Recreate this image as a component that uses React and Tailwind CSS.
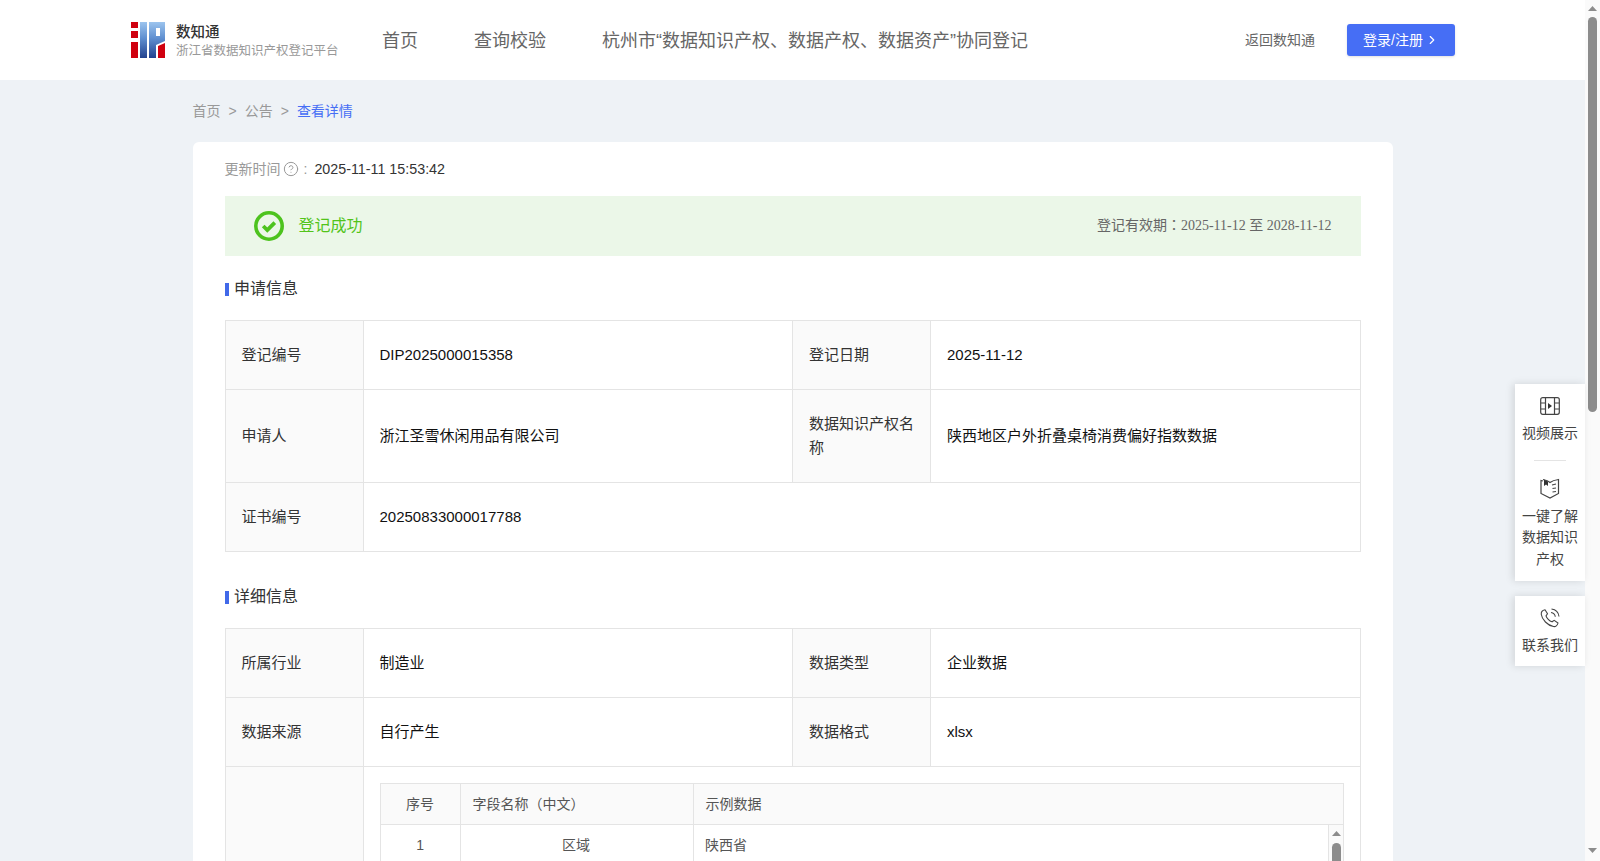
import { ChevronRight, CircleHelp } from "lucide-react";

const fieldRows = [
  ["1", "区域", "陕西省"],
  ["2", "产品类别", "户外折叠桌椅"],
  ["3", "消费群体", "家庭用户"],
  ["4", "偏好指数", "82.6"],
  ["5", "统计周期", "2025年"],
  ["6", "渠道", "线上"],
  ["7", "价格区间", "200-500元"],
];

function Logo() {
  return (
    <svg width="34" height="36" viewBox="0 0 34 36" className="shrink-0">
      <defs>
        <linearGradient id="logoBlue" x1="0" y1="0" x2="0" y2="1">
          <stop offset="0" stopColor="#9cc4ee" />
          <stop offset="0.45" stopColor="#5f8fd0" />
          <stop offset="1" stopColor="#22428f" />
        </linearGradient>
      </defs>
      <rect x="0" y="0" width="7" height="6" fill="#d0000f" />
      <rect x="0" y="9" width="7" height="7" fill="#d0000f" />
      <rect x="0" y="20" width="7" height="16" fill="#d0000f" />
      <rect x="9" y="0" width="7" height="36" fill="url(#logoBlue)" />
      <path d="M18 0H34V19L25 23V36H18Z" fill="url(#logoBlue)" />
      <rect x="25" y="6" width="4" height="8" fill="#fff" />
      <path d="M27 24L34 21V36H27Z" fill="#d0000f" />
    </svg>
  );
}

function CheckIcon() {
  return (
    <svg width="30" height="30" viewBox="0 0 30 30" className="shrink-0">
      <circle cx="15" cy="15" r="13.2" fill="none" stroke="#4dc31e" strokeWidth="3.6" />
      <path d="M9.2 15L13.3 19L20.8 11.600" fill="none" stroke="#4dc31e" strokeWidth="3.8" />
    </svg>
  );
}

function VideoIcon() {
  return (
    <svg width="20" height="18" viewBox="0 0 20 18" fill="none" stroke="#444" strokeWidth="1.2">
      <rect x="0.7" y="0.7" width="18.6" height="16.6" rx="2" />
      <path d="M5.5 1V17M14.5 1V17M1 6H5.5M1 12H5.5M14.5 6H19M14.5 12H19" />
      <path d="M8 6L12 9L8 12Z" fill="#333" stroke="none" />
    </svg>
  );
}

function BookIcon() {
  return (
    <svg width="20" height="21" viewBox="0 0 20 21" fill="none" stroke="#444" strokeWidth="1.2">
      <path d="M3 1.500C6 2 8.500 3 10 4.500C12 3 15 2 18.500 1.500V15.500L10 20L1 15.500V2.500L3 3" />
      <path d="M4 1.500V8L6 6.500L8 8V3.500" fill="#333" stroke="none" />
      <path d="M12 7L16 6M12.500 10.500L16 10M12.500 14L16 13.500" />
    </svg>
  );
}

function PhoneIcon() {
  return (
    <svg width="20" height="20" viewBox="0 0 20 20" fill="none" stroke="#444" strokeWidth="1.1">
      <path d="M5 1.800L7.500 5.800L6 7.800C6.500 10 9.500 13 12 13.800L14.200 12.300L18 15C17.500 17.500 15.500 19 13.500 18.500C7.500 17.500 2 11.500 1.300 6.500C1 4.200 2.500 2.300 5 1.800Z" />
      <path d="M11 4.500C13.500 4.800 15 6.300 15.300 8.800" />
      <path d="M11.500 1C15.500 1.500 18.500 4.300 19 8.500" />
    </svg>
  );
}

function Arrow({ down }) {
  return (
    <svg width="9" height="5" viewBox="0 0 9 5" className="shrink-0">
      <path d={down ? "M0 0H9L4.500 5Z" : "M4.500 0L9 5H0Z"} fill="#8c8c8c" />
    </svg>
  );
}

function SectionTitle({ children }) {
  return (
    <div className="flex items-center gap-[5.500px] text-[16px] leading-6 text-[#333]">
      <span className="h-[13px] w-1 bg-[#4169e9]" />
      {children}
    </div>
  );
}

function Label({ children }) {
  return (
    <td className="border border-[#e4e4e4] bg-[#fafafa] px-4 py-[22px] align-middle text-[#333]">
      {children}
    </td>
  );
}

function Value({ children, colSpan }) {
  return (
    <td colSpan={colSpan} className="border border-[#e4e4e4] px-4 py-[22px] align-middle text-[#111]">
      {children}
    </td>
  );
}

function InfoTable({ children }) {
  return (
    <table className="w-full table-fixed border-collapse text-[15px] leading-6">
      <colgroup>
        <col className="w-[138px]" />
        <col className="w-[429.500px]" />
        <col className="w-[138px]" />
        <col />
      </colgroup>
      <tbody>{children}</tbody>
    </table>
  );
}

function SideItem({ icon, lines }) {
  return (
    <div className="flex flex-col items-center">
      <div className="flex h-5 items-center">{icon}</div>
      <div className="mt-[7px] w-[56px] text-center text-[14px] leading-[21.500px] text-[#444]">
        {lines}
      </div>
    </div>
  );
}

export default function App() {
  return (
    <div className="flex h-screen overflow-hidden bg-[#eef2f6] font-['Liberation_Sans','Noto_Sans_CJK_SC',sans-serif]">
      <div className="relative min-w-0 flex-1">
        <div className="h-full overflow-y-auto">
          <header className="flex h-20 items-center bg-white pl-[131px] pr-[130px]">
            <Logo />
            <div className="mt-[2px] ml-[11px] w-[200px]">
              <div className="text-[14.500px] leading-5 font-medium text-[#333]">数知通</div>
              <div className="whitespace-nowrap text-[12.500px] leading-[19px] text-[#999]">
                浙江省数据知识产权登记平台
              </div>
            </div>
            <nav className="mt-[2px] ml-[6px] flex gap-[56px] text-[18px] text-[#666]">
              <span>首页</span>
              <span>查询校验</span>
              <span>杭州市“数据知识产权、数据产权、数据资产”协同登记</span>
            </nav>
            <div className="ml-auto flex items-center gap-8">
              <span className="text-[14px] text-[#666]">返回数知通</span>
              <button className="flex h-8 w-[108px] items-center justify-center gap-[2px] rounded-[3px] bg-[#466ef5] text-[14px] text-white shadow-sm">
                登录/注册
                <ChevronRight size={14} strokeWidth={2} />
              </button>
            </div>
          </header>

          <main className="mx-auto w-[1200px] pb-10">
            <div className="flex h-[62px] items-center gap-2 text-[14px] text-[#999]">
              <span>首页</span>
              <span>&gt;</span>
              <span>公告</span>
              <span>&gt;</span>
              <span className="text-[#466ef5]">查看详情</span>
            </div>

            <div className="min-h-[1600px] rounded-md bg-white px-8 pt-4">
              <div className="flex h-[22px] items-center text-[14px] text-[#999]">
                更新时间
                <CircleHelp size={16} strokeWidth={1.500} className="ml-[2px]" />
                <span className="mr-[7px] ml-[5px]">:</span>
                <span className="mt-px text-[14.300px] text-[#333]">2025-11-11 15:53:42</span>
              </div>

              <div className="mt-[16px] flex h-[60px] items-center bg-[#ebf7e8] pl-[29px] pr-[29px]">
                <CheckIcon />
                <span className="ml-[15px] text-[16px] text-[#52c41a]">登记成功</span>
                <span className="mb-[2px] ml-auto font-['Liberation_Serif','Noto_Sans_CJK_SC',serif] text-[14px] text-[#666]">
                  登记有效期<span className="font-['Noto_Sans_CJK_TC',serif]">：</span>2025-11-12 至 2028-11-12
                </span>
              </div>

              <div className="mt-[21px] mb-[19px]">
                <SectionTitle>申请信息</SectionTitle>
              </div>
              <InfoTable>
                <tr>
                  <Label>登记编号</Label>
                  <Value>DIP2025000015358</Value>
                  <Label>登记日期</Label>
                  <Value>2025-11-12</Value>
                </tr>
                <tr>
                  <Label>申请人</Label>
                  <Value>浙江圣雪休闲用品有限公司</Value>
                  <Label>数据知识产权名称</Label>
                  <Value>陕西地区户外折叠桌椅消费偏好指数数据</Value>
                </tr>
                <tr>
                  <Label>证书编号</Label>
                  <Value colSpan={3}>20250833000017788</Value>
                </tr>
              </InfoTable>

              <div className="mt-[33px] mb-[19px]">
                <SectionTitle>详细信息</SectionTitle>
              </div>
              <InfoTable>
                <tr>
                  <Label>所属行业</Label>
                  <Value>制造业</Value>
                  <Label>数据类型</Label>
                  <Value>企业数据</Value>
                </tr>
                <tr>
                  <Label>数据来源</Label>
                  <Value>自行产生</Value>
                  <Label>数据格式</Label>
                  <Value>xlsx</Value>
                </tr>
                <tr>
                  <Label />
                  <td colSpan={3} className="border border-[#e4e4e4] p-4">
                    <table className="w-full table-fixed border-collapse text-[14px] text-[#555]">
                      <colgroup>
                        <col className="w-[80px]" />
                        <col className="w-[233px]" />
                        <col />
                      </colgroup>
                      <thead>
                        <tr className="h-[41px] bg-[#fafafa]">
                          <th className="border border-[#e4e4e4] text-center font-normal">序号</th>
                          <th className="border border-[#e4e4e4] px-3 text-left font-normal">字段名称（中文）</th>
                          <th className="border border-[#e4e4e4] px-3 text-left font-normal">示例数据</th>
                        </tr>
                      </thead>
                    </table>
                    <div className="flex h-[240px] border-x border-b border-[#e4e4e4]">
                      <div className="min-w-0 flex-1 overflow-hidden">
                        <table className="w-full table-fixed border-collapse text-[14px] text-[#555]">
                          <colgroup>
                            <col className="w-[80px]" />
                            <col className="w-[233px]" />
                            <col />
                          </colgroup>
                          <tbody>
                            {fieldRows.map((row) => (
                              <tr key={row[0]} className="h-[41px]">
                                <td className="border-r border-b border-[#e4e4e4] text-center">{row[0]}</td>
                                <td className="border-r border-b border-[#e4e4e4] pr-[2px] text-center">{row[1]}</td>
                                <td className="border-b border-[#e4e4e4] pl-[11px]">{row[2]}</td>
                              </tr>
                            ))}
                          </tbody>
                        </table>
                      </div>
                      <div className="flex w-[15px] shrink-0 flex-col items-center border-l border-[#e4e4e4] bg-[#fafafa] pt-[6px] pl-[2px]">
                        <Arrow />
                        <div className="mt-[7px] h-[120px] w-[9px] rounded-[4.500px] bg-[#8c8c8c]" />
                      </div>
                    </div>
                  </td>
                </tr>
              </InfoTable>
            </div>
          </main>
        </div>

        <aside className="absolute top-[384px] right-0 flex w-[70px] flex-col gap-[15px]">
          <div className="bg-white pt-[12px] pb-[11px] shadow-[-2px_0_8px_rgba(0,0,0,0.12)]">
            <SideItem icon={<VideoIcon />} lines="视频展示" />
            <div className="mx-auto mt-[15px] mb-[18px] h-px w-8 bg-[#e4e4e4]" />
            <SideItem icon={<BookIcon />} lines="一键了解数据知识产权" />
          </div>
          <div className="bg-white pt-[12px] pb-[9px] shadow-[-2px_0_8px_rgba(0,0,0,0.12)]">
            <SideItem icon={<PhoneIcon />} lines="联系我们" />
          </div>
        </aside>
      </div>

      <div className="flex w-[15px] shrink-0 flex-col items-center bg-[#fafafa] pt-[6px] pb-[8px]">
        <Arrow />
        <div className="mt-[6px] h-[395px] w-[9px] rounded-[4.500px] bg-[#8c8c8c]" />
        <div className="mt-auto">
          <Arrow down />
        </div>
      </div>
    </div>
  );
}
